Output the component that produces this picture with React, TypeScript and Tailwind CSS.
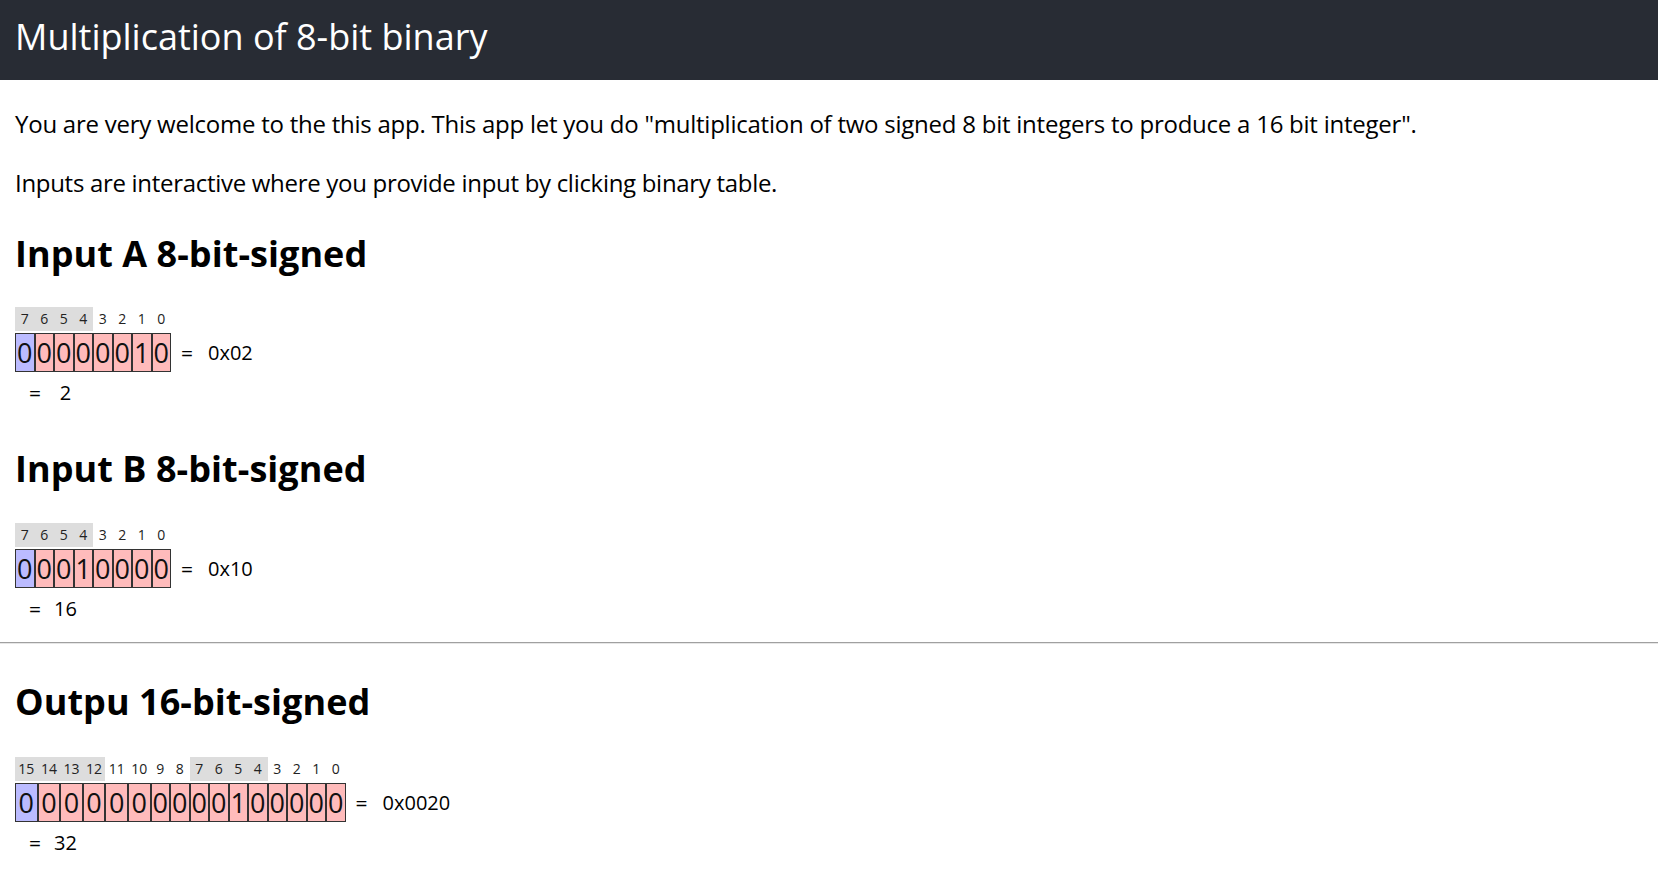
import React from "react";

const FONT = { fontFamily: '"Open Sans", "Noto Sans", sans-serif' };

function BitTable({ bits, hex, dec }: { bits: number[]; hex: string; dec: number }) {
  const n = bits.length;
  const cols = bits.map((b, i) => ({ bit: n - 1 - i, value: b }));
  return (
    <div>
      <div className="flex">
        {cols.map((c) => (
          <div
            key={c.bit}
            className={
              (c.bit >= 10 ? "w-[22.6px] " : "w-[19.5px] ") +
              (Math.floor(c.bit / 4) % 2 === 1 ? "bg-[#dddddd] " : "") +
              "h-[24px] text-center text-[14px] leading-[24px] text-[#222]"
            }
          >
            {c.bit}
          </div>
        ))}
      </div>
      <div className="mt-[2px] flex items-center">
        <div className="flex">
          {cols.map((c) => (
            <div
              key={c.bit}
              className={
                (n > 8 && c.bit >= 10 ? "w-[22.6px] " : "w-[19.5px] ") +
                (c.bit === n - 1 ? "bg-[#bbbbff] " : "bg-[#ffbbbb] ") +
                "h-[39px] border border-[#333] text-center text-[27px] leading-[37px] text-[#111]"
              }
            >
              {c.value}
            </div>
          ))}
        </div>
        <span className="ml-[10px] text-[21px] leading-[24px]">=</span>
        <span className="ml-[15px] text-[20px] leading-[24px]">{hex}</span>
      </div>
      <div className="mt-[9px] flex text-[20px] leading-[24px]">
        <span className="ml-[14px] text-[21px]">=</span>
        <span className="ml-[13px] w-[23px] text-center">{dec}</span>
      </div>
    </div>
  );
}

export default function App() {
  const a = [0, 0, 0, 0, 0, 0, 1, 0];
  const b = [0, 0, 0, 1, 0, 0, 0, 0];
  const out = [0, 0, 0, 0, 0, 0, 0, 0, 0, 0, 1, 0, 0, 0, 0, 0];
  return (
    <div className="min-h-screen bg-white text-black" style={FONT}>
      <header className="h-[80px] bg-[#282c34] pl-[15px] pt-[15px]">
        <h1 className="text-[36px] leading-[44px] tracking-[0px] text-white">
          Multiplication of 8-bit binary
        </h1>
      </header>
      <main className="px-[15px]">
        <p className="mt-[28px] text-[24px] leading-[32px] tracking-[-0.24px]">
          You are very welcome to the this app. This app let you do "multiplication of two signed 8 bit integers to produce a 16 bit integer".
        </p>
        <p className="mt-[27px] text-[24px] leading-[32px] tracking-[-0.3px]">
          Inputs are interactive where you provide input by clicking binary table.
        </p>
        <h2 className="mt-[33px] text-[36px] font-bold leading-[44px] tracking-[0.05px]">Input A 8-bit-signed</h2>
        <div className="mt-[31px]">
          <BitTable bits={a} hex="0x02" dec={2} />
        </div>
        <h2 className="mt-[42px] text-[36px] font-bold leading-[44px] tracking-[0.05px]">Input B 8-bit-signed</h2>
        <div className="mt-[32px]">
          <BitTable bits={b} hex="0x10" dec={16} />
        </div>
      </main>
      <hr className="mt-[21px] border-t-[1px] border-b-[1px] border-t-[#a0a0a0] border-b-[#e6e6e6]" />
      <main className="px-[15px]">
        <h2 className="mt-[36px] text-[36px] font-bold leading-[44px] tracking-[0.05px]">Outpu 16-bit-signed</h2>
        <div className="mt-[33px]">
          <BitTable bits={out} hex="0x0020" dec={32} />
        </div>
      </main>
    </div>
  );
}
